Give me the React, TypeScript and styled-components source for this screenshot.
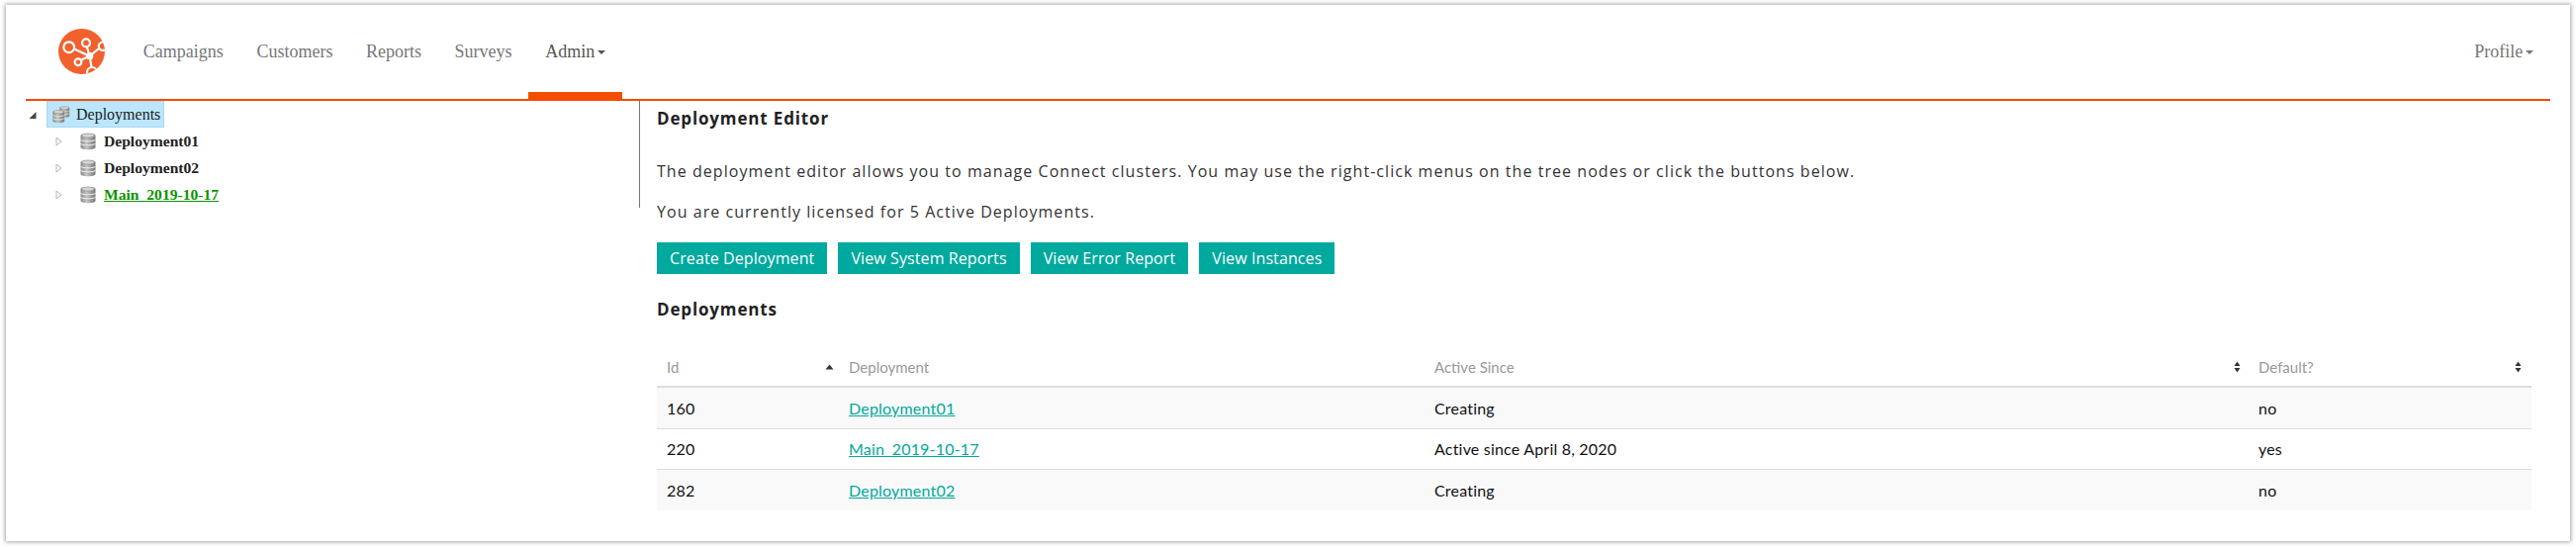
import React from "react";
import styled, { createGlobalStyle } from "styled-components";

const GlobalStyle = createGlobalStyle`
  html, body {
    margin: 0;
    padding: 0;
    background: #fff;
  }
  body {
    font-family: "Open Sans", "Liberation Sans", sans-serif;
    color: #222;
  }
`;

const Page = styled.div`
  width: 2604px;
  height: 553px;
  box-sizing: border-box;
  padding: 5px 6px 6px 6px;
`;

const Card = styled.div`
  height: 542px;
  background: #fff;
  box-shadow: 0 0 4px 1px rgba(0, 0, 0, 0.35);
  padding: 0 20px 0 20px;
  box-sizing: border-box;
`;

const Navbar = styled.nav`
  height: 97px;
  box-sizing: border-box;
  border-bottom: 2px solid #f54d00;
  display: flex;
  align-items: stretch;
  padding-left: 33px;
  font-family: "Liberation Serif", serif;
  font-size: 18px;
`;

const Logo = styled.svg`
  width: 47px;
  height: 46px;
  margin-top: 24px;
  margin-right: 22px;
`;

const NavLink = styled.a<{ $active?: boolean }>`
  display: flex;
  align-items: flex-start;
  padding: 37px 16.8px 0;
  color: ${(p) => (p.$active ? "#555" : "#777")};
  border-bottom: 7px solid ${(p) => (p.$active ? "#f54d00" : "transparent")};
  box-sizing: border-box;
`;

const NavSpacer = styled.div`
  flex: 1;
`;

const Caret = styled.span`
  width: 0;
  height: 0;
  margin: 9px 0 0 3px;
  border-left: 4px solid transparent;
  border-right: 4px solid transparent;
  border-top: 4px solid currentColor;
`;

const Body = styled.div`
  display: flex;
  height: 420px;
`;

const TreePane = styled.div`
  width: 621px;
  height: 108px;
  flex: none;
  box-sizing: border-box;
  border-right: 1px solid #777;
  font-family: "Liberation Serif", serif;
  font-size: 16px;
  color: #222;
`;

const TreeRow = styled.div<{ $child?: boolean }>`
  height: 27px;
  display: flex;
  align-items: center;
  padding-left: ${(p) => (p.$child ? "29px" : "3px")};
`;

const Expander = styled.svg`
  width: 9px;
  height: 12px;
  flex: none;
`;

const RootNode = styled.div`
  margin-left: 9px;
  width: 119px;
  height: 27px;
  box-sizing: border-box;
  display: flex;
  align-items: center;
  gap: 6px;
  padding-left: 5px;
  background: #bbe6fb;
  border: 1px solid #a8d8ef;
`;

const NodeIcon = styled.svg`
  width: 16px;
  height: 18px;
  flex: none;
  margin-left: 17px;
  margin-right: 8px;
`;

const RootIcon = styled.svg`
  width: 18px;
  height: 18px;
  flex: none;
`;

const NodeLabel = styled.span<{ $active?: boolean }>`
  font-size: 15.6px;
  font-weight: bold;
  color: ${(p) => (p.$active ? "#0a9400" : "#222")};
  text-decoration: ${(p) => (p.$active ? "underline" : "none")};
`;

const Content = styled.main`
  flex: 1;
  padding-left: 17px;
  padding-right: 19px;
`;

const Heading = styled.h2<{ $top: number }>`
  margin: ${(p) => p.$top}px 0 0;
  font-size: 17px;
  line-height: 22px;
  font-weight: 700;
  letter-spacing: 0.85px;
  color: #222;
`;

const Paragraph = styled.p<{ $top: number }>`
  margin: ${(p) => p.$top}px 0 0;
  font-size: 16px;
  line-height: 22px;
  letter-spacing: 1.05px;
  color: #333;
`;

const ButtonRow = styled.div`
  display: flex;
  gap: 11px;
  margin-top: 20px;
`;

const ActionButton = styled.button`
  height: 32px;
  padding: 0 13px;
  border: none;
  background: #00a99d;
  color: #fff;
  font-family: inherit;
  font-size: 16px;
  letter-spacing: 0.1px;
  white-space: nowrap;
`;

const Table = styled.table`
  width: 1895px;
  margin-top: 28px;
  border-collapse: collapse;
  table-layout: fixed;
  font-family: Lato, "Open Sans", sans-serif;
  font-size: 16px;
  letter-spacing: 0.2px;
`;

const HeadCell = styled.th`
  height: 38px;
  padding: 0 10px;
  border-bottom: 2px solid #ddd;
  color: #999;
  font-size: 15px;
  font-weight: 400;
  letter-spacing: 0;
  text-align: left;
`;

const HeadInner = styled.div`
  display: flex;
  align-items: center;
  justify-content: space-between;
`;

const Row = styled.tr<{ $striped?: boolean }>`
  background: ${(p) => (p.$striped ? "#f9f9f9" : "#fff")};
`;

const Cell = styled.td`
  height: 40.5px;
  padding: 0 10px;
  border-bottom: 1px solid #ddd;
  color: #111;
  ${Row}:last-child & {
    border-bottom: none;
  }
`;

const DeploymentLink = styled.a`
  color: #00a99d;
  text-decoration: underline;
`;

const SortIcon = styled.svg<{ $shift: number }>`
  width: 9px;
  height: 12px;
  flex: none;
  margin-right: ${(p) => p.$shift}px;
`;

const Sort = ({ up, shift }: { up?: boolean; shift: number }) => (
  <SortIcon viewBox="0 0 9 12" $shift={shift}>
    {up ? (
      <path d="M4.5 3.5L8.5 8.5H.5z" fill="#333" />
    ) : (
      <path d="M4.5.5L7.5 5H1.5zM4.5 11.5L7.5 7H1.5z" fill="#333" />
    )}
  </SortIcon>
);

const CylinderGradient = () => (
  <defs>
    <linearGradient id="cylinderBody" x1="0" x2="1" y1="0" y2="0">
      <stop offset="0" stopColor="#8a8a8a" />
      <stop offset="0.4" stopColor="#c4c4c4" />
      <stop offset="1" stopColor="#777" />
    </linearGradient>
  </defs>
);

const Cylinder = () => (
  <g>
    <path d="M.5 3C.5 .4 15.5 .4 15.5 3V15C15.5 18 .5 18 .5 15z" fill="url(#cylinderBody)" />
    <path d="M.5 7C.5 9.4 15.5 9.4 15.5 7M.5 11C.5 13.4 15.5 13.4 15.5 11" fill="none" stroke="#eee" strokeWidth="1" />
    <ellipse cx="8" cy="3" rx="6.5" ry="2" fill="#d6d6d6" stroke="#8a8a8a" strokeWidth=".6" />
  </g>
);

const rows = [
  { id: 160, name: "Deployment01", since: "Creating", isDefault: "no" },
  { id: 220, name: "Main_2019-10-17", since: "Active since April 8, 2020", isDefault: "yes" },
  { id: 282, name: "Deployment02", since: "Creating", isDefault: "no" },
];

const App = () => (
  <Page>
    <GlobalStyle />
    <Card>
      <Navbar>
        <Logo viewBox="0 0 47 46">
          <defs>
            <clipPath id="logoClip">
              <ellipse cx="23.5" cy="23" rx="23.5" ry="23" />
            </clipPath>
          </defs>
          <ellipse cx="23.5" cy="23" rx="23.5" ry="23" fill="#f2602e" />
          <g clipPath="url(#logoClip)" fill="none" stroke="#fff" strokeWidth="2.2">
            <circle cx="10.7" cy="18.7" r="5.4" />
            <circle cx="28" cy="14.3" r="4" />
            <circle cx="45" cy="17.7" r="4.2" />
            <circle cx="20" cy="33.7" r="3.4" />
            <circle cx="34" cy="44" r="5" />
            <path d="M16 20.5L31.7 27.7M28.8 18.2L31.7 27.7M41 20L31.7 27.7M23 31.5L31.7 27.7M33.5 39L31.7 27.7" />
          </g>
          <circle cx="31.7" cy="27.7" r="3.6" fill="#fff" />
        </Logo>
        <NavLink>Campaigns</NavLink>
        <NavLink>Customers</NavLink>
        <NavLink>Reports</NavLink>
        <NavLink>Surveys</NavLink>
        <NavLink $active>
          Admin
          <Caret />
        </NavLink>
        <NavSpacer />
        <NavLink>
          Profile
          <Caret />
        </NavLink>
      </Navbar>
      <Body>
        <TreePane>
          <TreeRow>
            <Expander viewBox="0 0 9 12">
              <path d="M7.5 3V10H.5z" fill="#444" />
            </Expander>
            <RootNode>
              <RootIcon viewBox="0 0 24 24">
                <CylinderGradient />
                <g transform="translate(9 0) scale(.9)">
                  <Cylinder />
                </g>
                <g transform="translate(0 5) scale(1.05)">
                  <Cylinder />
                </g>
              </RootIcon>
              Deployments
            </RootNode>
          </TreeRow>
          {["Deployment01", "Deployment02", "Main_2019-10-17"].map((name) => (
            <TreeRow $child key={name}>
              <Expander viewBox="0 0 9 12">
                <path d="M2 2L7 6L2 10z" fill="#fff" stroke="#b5b5b5" />
              </Expander>
              <NodeIcon viewBox="0 0 16 18">
                <Cylinder />
              </NodeIcon>
              <NodeLabel $active={name.startsWith("Main")}>{name}</NodeLabel>
            </TreeRow>
          ))}
        </TreePane>
        <Content>
          <Heading $top={7}>Deployment Editor</Heading>
          <Paragraph $top={31}>
            The deployment editor allows you to manage Connect clusters. You may use the right-click menus on the tree nodes or click the buttons below.
          </Paragraph>
          <Paragraph $top={19}>You are currently licensed for 5 Active Deployments.</Paragraph>
          <ButtonRow>
            <ActionButton>Create Deployment</ActionButton>
            <ActionButton>View System Reports</ActionButton>
            <ActionButton>View Error Report</ActionButton>
            <ActionButton>View Instances</ActionButton>
          </ButtonRow>
          <Heading $top={25}>Deployments</Heading>
          <Table>
            <colgroup>
              <col style={{ width: 184 }} />
              <col style={{ width: 592 }} />
              <col style={{ width: 833 }} />
              <col style={{ width: 286 }} />
            </colgroup>
            <thead>
              <tr>
                <HeadCell>
                  <HeadInner>
                    Id
                    <Sort up shift={-5} />
                  </HeadInner>
                </HeadCell>
                <HeadCell>Deployment</HeadCell>
                <HeadCell>
                  <HeadInner>
                    Active Since
                    <Sort shift={-3} />
                  </HeadInner>
                </HeadCell>
                <HeadCell>
                  <HeadInner>
                    Default?
                    <Sort shift={-1} />
                  </HeadInner>
                </HeadCell>
              </tr>
            </thead>
            <tbody>
              {rows.map((row, i) => (
                <Row $striped={i % 2 === 0} key={row.id}>
                  <Cell>{row.id}</Cell>
                  <Cell>
                    <DeploymentLink>{row.name}</DeploymentLink>
                  </Cell>
                  <Cell>{row.since}</Cell>
                  <Cell>{row.isDefault}</Cell>
                </Row>
              ))}
            </tbody>
          </Table>
        </Content>
      </Body>
    </Card>
  </Page>
);

export default App;
